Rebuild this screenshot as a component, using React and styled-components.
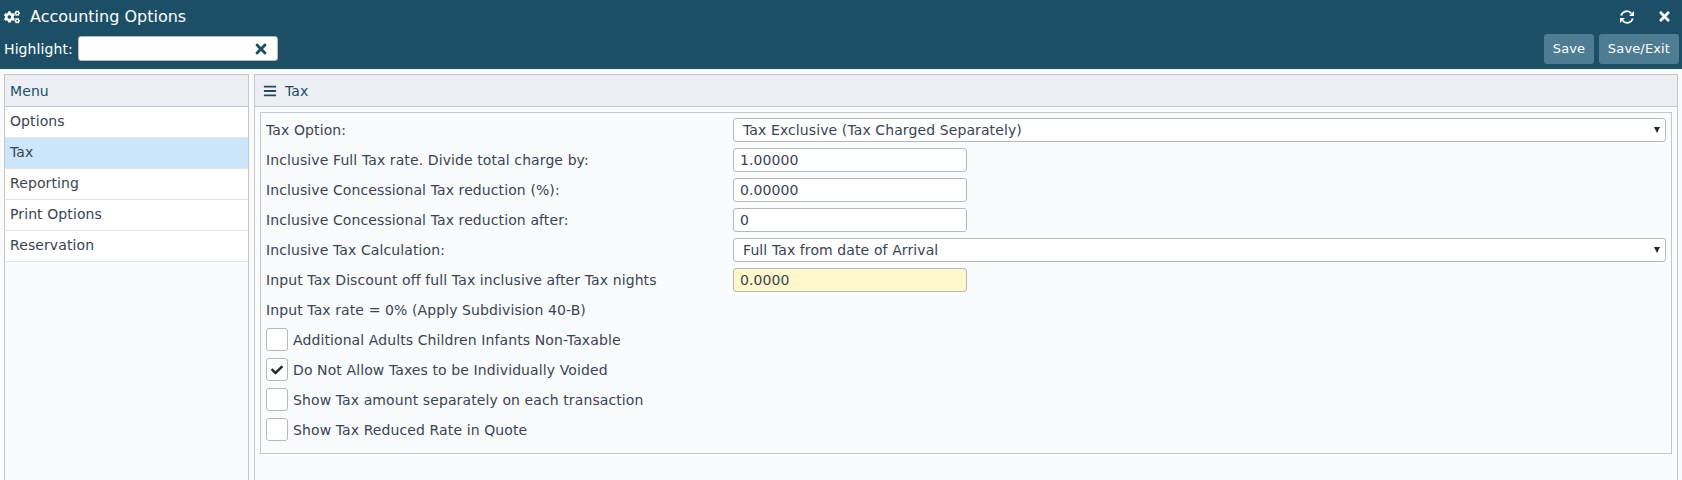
import React from "react";
import styled, { createGlobalStyle } from "styled-components";
import { FaCogs, FaTimes, FaBars, FaCheck } from "react-icons/fa";

const Global = createGlobalStyle`
  html, body { margin: 0; padding: 0; height: 100%; background: #fafbfd; }
  body { font-family: "DejaVu Sans", sans-serif; font-size: 14px; letter-spacing: 0.1px; color: #3b4351; }
  * { box-sizing: border-box; }
`;

const Page = styled.div`
  width: 1682px;
  height: 480px;
  overflow: hidden;
  display: flex;
  flex-direction: column;
`;

const Header = styled.header`
  height: 69px;
  flex: none;
  background: #1c4f66;
  color: #fff;
  display: flex;
  flex-direction: column;
  padding: 0 3px 0 4px;
`;

const TitleRow = styled.div`
  height: 33px;
  display: flex;
  align-items: center;
  gap: 9px;
`;

const Title = styled.span`
  font-size: 16px;
  letter-spacing: 0;
  flex: 1;
`;

const TitleIcon = styled.span`
  display: flex;
  font-size: ${(p) => p.$size || 14}px;
  margin-right: ${(p) => p.$right || 0}px;
`;

const ToolRow = styled.div`
  display: flex;
  align-items: center;
  height: 31px;
`;

const HighlightLabel = styled.label`
  width: 74px;
`;

const HighlightBox = styled.div`
  width: 200px;
  height: 25px;
  background: #fff;
  border: 1px solid #b5b9bd;
  border-radius: 3px;
  display: flex;
  align-items: center;
  justify-content: flex-end;
  padding-right: 8px;
  color: #1c4f66;
  font-size: 16px;
`;

const Spacer = styled.div`
  flex: 1;
`;

const HeaderButton = styled.button`
  height: 30px;
  width: ${(p) => p.$w}px;
  margin-left: 5px;
  border: 0;
  border-radius: 3px;
  background: #4e7c93;
  color: #fff;
  font: 13px "DejaVu Sans", sans-serif;
  letter-spacing: 0.15px;
  padding: 0;
`;

const Body = styled.div`
  flex: 1;
  display: flex;
  gap: 5px;
  padding: 5px 4px 0;
  min-height: 0;
`;

const Panel = styled.section`
  border: 1px solid #c4c6c8;
  border-bottom: 0;
  display: flex;
  flex-direction: column;
  width: ${(p) => (p.$w ? p.$w + "px" : "auto")};
  flex: ${(p) => (p.$w ? "none" : 1)};
`;

const PanelHead = styled.div`
  height: 32px;
  flex: none;
  background: #eceff4;
  border-bottom: 1px solid #c4c6c8;
  display: flex;
  align-items: center;
  padding-left: 5px;
  gap: 8px;
  color: #1c4f66;
`;

const MenuItem = styled.div`
  height: 31px;
  display: flex;
  align-items: center;
  padding: 0 0 2px 5px;
  background: ${(p) => (p.$active ? "#cce6fb" : "#fff")};
  border-bottom: 1px solid #e3e5e8;
`;

const HeadIcon = styled.span`
  display: flex;
  font-size: 14px;
  color: #1c4f66;
  margin-left: 3px;
`;

const FormBox = styled.div`
  margin: 5px 5px 0;
  height: 342px;
  border: 1px solid #c4c6c8;
  padding: 2px 5px 0;
`;

const Row = styled.div`
  height: 30px;
  display: grid;
  grid-template-columns: 467px 1fr;
  align-items: center;
`;

const FieldLabel = styled.span`
  display: block;
`;

const SelectBox = styled.div`
  height: 24px;
  background: #fff;
  border: 1px solid #b5b9bd;
  border-radius: 3px;
  display: flex;
  align-items: center;
  justify-content: space-between;
  padding: 0 5px 0 9px;
  color: #3b4351;
`;

const Arrow = styled.span`
  width: 0;
  height: 0;
  border-left: 3.5px solid transparent;
  border-right: 3.5px solid transparent;
  border-top: 6px solid #20252e;
`;

const NumberBox = styled.div`
  height: 24px;
  width: 234px;
  background: ${(p) => (p.$warn ? "#fff8cc" : "#fff")};
  border: 1px solid #b5b9bd;
  border-radius: 3px;
  display: flex;
  align-items: center;
  padding-left: 6px;
`;

const CheckRow = styled.div`
  height: 30px;
  display: flex;
  align-items: flex-start;
  padding-top: 3px;
  gap: 5px;
`;

const CheckText = styled.span`
  line-height: 25px;
`;

const Box = styled.span`
  width: 22px;
  height: 23px;
  background: #fff;
  border: 1px solid #b5b9bd;
  border-radius: 3px;
  display: flex;
  align-items: center;
  justify-content: center;
  font-size: 12px;
  color: #20252e;
`;

const menu = ["Options", "Tax", "Reporting", "Print Options", "Reservation"];
const checks = [
  ["Additional Adults Children Infants Non-Taxable", false],
  ["Do Not Allow Taxes to be Individually Voided", true],
  ["Show Tax amount separately on each transaction", false],
  ["Show Tax Reduced Rate in Quote", false],
];

const RefreshIcon = () => (
  <svg width="16" height="14" viewBox="0 0 16 14" fill="none">
    <path d="M2.2 5.6A5.8 5.8 0 0 1 12.4 3.4" stroke="#fff" strokeWidth="1.7" />
    <path d="M13.8 8.4A5.8 5.8 0 0 1 3.6 10.6" stroke="#fff" strokeWidth="1.7" />
    <path d="M15 1v5h-5z" fill="#fff" />
    <path d="M1 13V8h5z" fill="#fff" />
  </svg>
);

export default function App() {
  return (
    <Page>
      <Global />
      <Header>
        <TitleRow>
          <TitleIcon $size={16} $right={1}><FaCogs /></TitleIcon>
          <Title>Accounting Options</Title>
          <TitleIcon $right={13}><RefreshIcon /></TitleIcon>
          <TitleIcon $size={15} $right={7}><FaTimes /></TitleIcon>
        </TitleRow>
        <ToolRow>
          <HighlightLabel>Highlight:</HighlightLabel>
          <HighlightBox><FaTimes /></HighlightBox>
          <Spacer />
          <HeaderButton $w={50}>Save</HeaderButton>
          <HeaderButton $w={80}>Save/Exit</HeaderButton>
        </ToolRow>
      </Header>
      <Body>
        <Panel $w={245}>
          <PanelHead>Menu</PanelHead>
          {menu.map((m) => (
            <MenuItem key={m} $active={m === "Tax"}>{m}</MenuItem>
          ))}
        </Panel>
        <Panel>
          <PanelHead><HeadIcon><FaBars /></HeadIcon>Tax</PanelHead>
          <FormBox>
            <Row>
              <FieldLabel>Tax Option:</FieldLabel>
              <SelectBox>Tax Exclusive (Tax Charged Separately)<Arrow /></SelectBox>
            </Row>
            <Row>
              <FieldLabel>Inclusive Full Tax rate. Divide total charge by:</FieldLabel>
              <NumberBox>1.00000</NumberBox>
            </Row>
            <Row>
              <FieldLabel>Inclusive Concessional Tax reduction (%):</FieldLabel>
              <NumberBox>0.00000</NumberBox>
            </Row>
            <Row>
              <FieldLabel>Inclusive Concessional Tax reduction after:</FieldLabel>
              <NumberBox>0</NumberBox>
            </Row>
            <Row>
              <FieldLabel>Inclusive Tax Calculation:</FieldLabel>
              <SelectBox>Full Tax from date of Arrival<Arrow /></SelectBox>
            </Row>
            <Row>
              <FieldLabel>Input Tax Discount off full Tax inclusive after Tax nights</FieldLabel>
              <NumberBox $warn>0.0000</NumberBox>
            </Row>
            <Row>
              <FieldLabel>Input Tax rate = 0% (Apply Subdivision 40-B)</FieldLabel>
            </Row>
            {checks.map(([t, c]) => (
              <CheckRow key={t}>
                <Box>{c && <FaCheck />}</Box>
                <CheckText>{t}</CheckText>
              </CheckRow>
            ))}
          </FormBox>
        </Panel>
      </Body>
    </Page>
  );
}
